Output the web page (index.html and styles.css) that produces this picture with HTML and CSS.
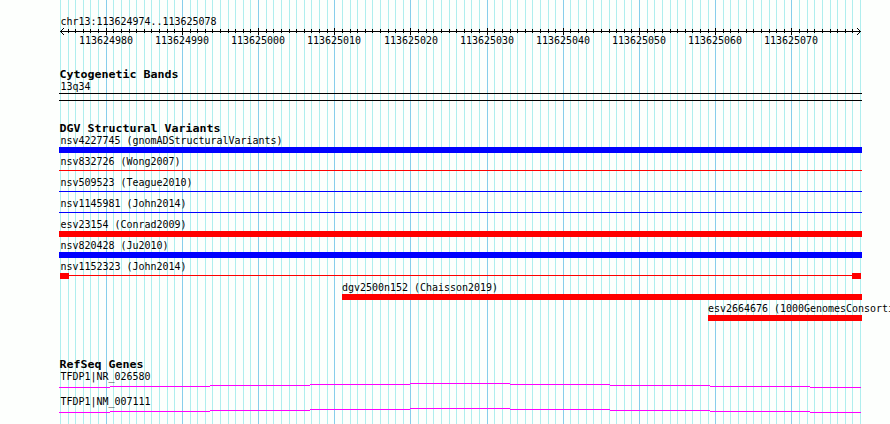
FILE: index.html
```
<!DOCTYPE html>
<html lang="en">
<head>
<meta charset="utf-8">
<title>chr13:113624974..113625078</title>
<link rel="stylesheet" href="styles.css">
</head>
<body>
<main class="browser">
  <svg class="grid" width="890" height="424" shape-rendering="crispEdges" aria-hidden="true">
    <path id="minor" class="minor"/><path id="major" class="major"/>
  </svg>
  <header class="ruler">
    <div class="label">chr13:113624974..113625078</div>
    <svg class="axis" width="803" height="7" viewBox="59 0 803 7" shape-rendering="crispEdges">
      <path id="ticks" class="ink"/>
      <path class="ink" d="M60 3h801v1H60zM61 2h1v1h-1zM62 1h1v1h-1zM63 0h1v1h-1zM61 4h1v1h-1zM62 5h1v1h-1zM63 6h1v1h-1zM859 2h1v1h-1zM858 1h1v1h-1zM857 0h1v1h-1zM859 4h1v1h-1zM858 5h1v1h-1zM857 6h1v1h-1z"/>
    </svg>
    <div class="numbers" id="numbers"></div>
  </header>
  <section class="cyto">
    <h2>Cytogenetic Bands</h2>
    <div class="label">13q34</div>
    <div class="band"></div>
  </section>
  <section class="variants">
    <h2>DGV Structural Variants</h2>
    <div class="row"><div class="label">nsv4227745 (gnomADStructuralVariants)</div><div class="bar blue"></div></div>
    <div class="row"><div class="label">nsv832726 (Wong2007)</div><div class="line red"></div></div>
    <div class="row"><div class="label">nsv509523 (Teague2010)</div><div class="line blue"></div></div>
    <div class="row"><div class="label">nsv1145981 (John2014)</div><div class="line blue"></div></div>
    <div class="row"><div class="label">esv23154 (Conrad2009)</div><div class="bar red"></div></div>
    <div class="row"><div class="label">nsv820428 (Ju2010)</div><div class="bar blue"></div></div>
    <div class="row"><div class="label">nsv1152323 (John2014)</div><div class="span"><i class="cap"></i><i class="link"></i><i class="cap"></i></div></div>
    <div class="row from-chaisson"><div class="label">dgv2500n152 (Chaisson2019)</div><div class="bar red"></div></div>
    <div class="row from-genomes"><div class="label">esv2664676 (1000GenomesConsortium)</div><div class="bar red"></div></div>
  </section>
  <section class="genes">
    <h2>RefSeq Genes</h2>
    <div class="gene"><div class="label">TFDP1|NR_026580</div>
      <svg class="intron" width="803" height="5" viewBox="59 0 803 5" shape-rendering="crispEdges"><path d="M59 4h51v1H59zM110 3h100v1H110zM210 2h100v1H210zM310 1h100v1H310zM410 0h100v1H410zM510 1h100v1H510zM610 2h100v1H610zM710 3h100v1H710zM810 4h51v1H810z"/></svg></div>
    <div class="gene"><div class="label">TFDP1|NM_007111</div>
      <svg class="intron" width="803" height="5" viewBox="59 0 803 5" shape-rendering="crispEdges"><path d="M59 4h51v1H59zM110 3h100v1H110zM210 2h100v1H210zM310 1h100v1H310zM410 0h100v1H410zM510 1h100v1H510zM610 2h100v1H610zM710 3h100v1H710zM810 4h51v1H810z"/></svg></div>
  </section>
</main>
<script src="ruler.js"></script>
</body>
</html>
```
FILE: styles.css
```
body {
  margin: 0;
  background: #fdfffd;
  color: #000;
}

.browser {
  position: relative;
  box-sizing: border-box;
  width: 890px;
  height: 424px;
  padding: 16px 0 0 59px;
  overflow: hidden;
  font: 11px/12px "DejaVu Sans Mono", monospace;
}

/* Coordinate grid behind every track */
.grid { position: absolute; left: 0; top: 0; z-index: -1; }
.minor { fill: #afeeee; }
.major { fill: #87ceeb; }
.ink { fill: #000; }
svg { display: block; }

.label {
  height: 12px;
  padding-left: 1.6px;
  white-space: pre;
  transform: scaleX(0.906);
  transform-origin: 0 0;
  width: max-content;
}

h2 {
  margin: 0;
  height: 12px;
  padding-left: 0.5px;
  width: max-content;
  font: bold 11px/12px "DejaVu Sans Mono", monospace;
  transform: scaleX(1.057);
  transform-origin: 0 0;
}

.ruler { height: 53px; }
.numbers {
  display: grid;
  grid-template-columns: repeat(10, 76.19px);
  margin-left: 8.8px;
}
.numbers span { text-align: center; transform: scaleX(0.906); }

.cyto { height: 54px; }
.band {
  box-sizing: border-box;
  width: 803px;
  height: 8px;
  border: solid #000;
  border-width: 1px 0;
}

.variants { height: 236px; }
.row { height: 21px; width: 803px; }
.from-chaisson { margin-left: 283px; width: 520px; }
.from-genomes { margin-left: 649px; width: 154px; }
.from-chaisson .label, .from-genomes .label { padding-left: 0; }
.bar { height: 6px; }
.line { height: 1px; margin-top: 2px; }
.row, .gene { display: flow-root; }
.red { background: #f00; }
.blue { background: #00f; }
.span { display: flex; align-items: flex-start; height: 6px; width: 801px; margin-left: 1px; }
.cap { width: 9px; height: 6px; background: #f00; }
.link { flex: 1; height: 1px; margin-top: 2px; background: #f00; }

.gene { height: 25px; }
.intron { fill: #f0f; }
```
FILE: ruler.js
```
const left = 60, start = 113624974, bases = 105, step = 800 / bases;
let minor = "", major = "", ticks = "", numbers = "";
for (let i = 0; i <= bases; i++) {
  const x = Math.round(left + i * step);
  const line = `M${x} 0h1v424h-1z`;
  if ((start + i) % 10 === 0) {
    major += line;
    ticks += `M${x} 0h1v7h-1z`;
    numbers += `<span>${start + i}</span>`;
  } else {
    minor += line;
    if (i > 0 && i < bases) ticks += `M${x} 1h1v4h-1z`;
  }
}
document.getElementById("minor").setAttribute("d", minor);
document.getElementById("major").setAttribute("d", major);
document.getElementById("ticks").setAttribute("d", ticks);
document.getElementById("numbers").innerHTML = numbers;
```
